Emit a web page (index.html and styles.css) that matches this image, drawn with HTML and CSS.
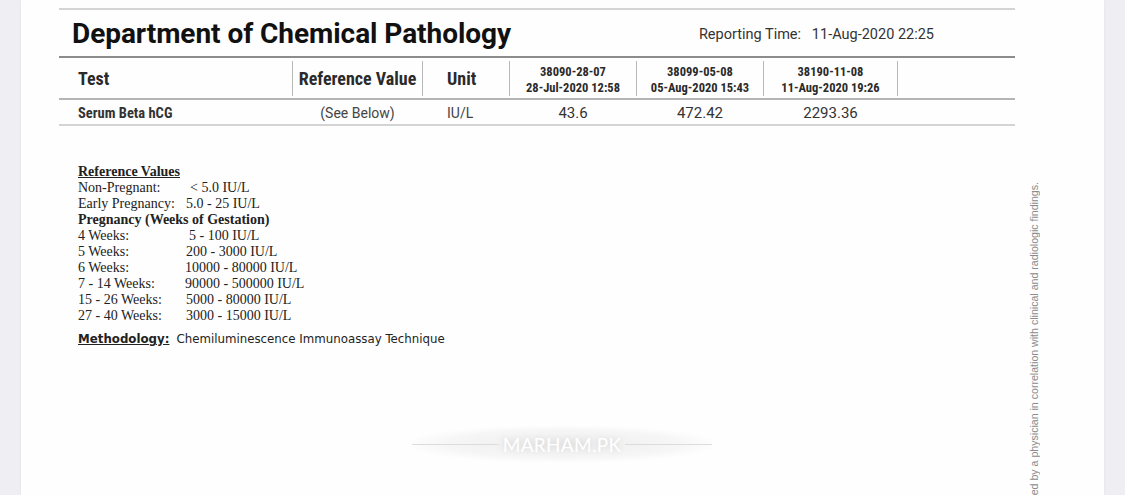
FILE: index.html
```html
<!DOCTYPE html>
<html>
<head>
<meta charset="utf-8">
<link rel="stylesheet" href="styles.css">
</head>
<body>
<div class="page">
  <div class="report">
    <div class="rule rule-light"></div>
    <div class="title-row">
      <h1 class="title">Department of Chemical Pathology</h1>
      <div class="reporting">Reporting Time:&nbsp;&nbsp; 11-Aug-2020 22:25</div>
    </div>
    <div class="rule rule-dark"></div>
    <div class="thead">
      <div class="th c-test">Test</div>
      <div class="th c-ref center">Reference Value</div>
      <div class="th c-unit">Unit</div>
      <div class="th c-date center small"><span>38090-28-07</span><span>28-Jul-2020 12:58</span></div>
      <div class="th c-date center small"><span>38099-05-08</span><span>05-Aug-2020 15:43</span></div>
      <div class="th c-date3 center small"><span>38190-11-08</span><span>11-Aug-2020 19:26</span></div>
    </div>
    <div class="rule rule-mid"></div>
    <div class="trow">
      <div class="td c-test name">Serum Beta hCG</div>
      <div class="td c-ref center">(See Below)</div>
      <div class="td c-unit">IU/L</div>
      <div class="td c-date center num">43.6</div>
      <div class="td c-date center num">472.42</div>
      <div class="td c-date3 center num">2293.36</div>
    </div>
    <div class="rule rule-light"></div>

    <div class="refs">
      <div class="ref-title">Reference Values</div>
      <div class="ref-line"><span class="lbl">Non-Pregnant:</span><span class="val in5">&lt; 5.0 IU/L</span></div>
      <div class="ref-line"><span class="lbl">Early Pregnancy:</span><span class="val in1">5.0 - 25 IU/L</span></div>
      <div class="ref-sub">Pregnancy (Weeks of Gestation)</div>
      <div class="ref-line"><span class="lbl">4 Weeks:</span><span class="val in4">5 - 100 IU/L</span></div>
      <div class="ref-line"><span class="lbl">5 Weeks:</span><span class="val in1">200 - 3000 IU/L</span></div>
      <div class="ref-line"><span class="lbl">6 Weeks:</span><span class="val">10000 - 80000 IU/L</span></div>
      <div class="ref-line"><span class="lbl">7 - 14 Weeks:</span><span class="val">90000 - 500000 IU/L</span></div>
      <div class="ref-line"><span class="lbl">15 - 26 Weeks:</span><span class="val in1">5000 - 80000 IU/L</span></div>
      <div class="ref-line"><span class="lbl">27 - 40 Weeks:</span><span class="val in1">3000 - 15000 IU/L</span></div>
      <div class="method"><span class="method-lbl">Methodology:</span><span class="method-txt">Chemiluminescence Immunoassay Technique</span></div>
    </div>
  </div>

  <div class="side-note">ed by a physician in correlation with clinical and radiologic findings.</div>

  <div class="watermark">
    <span class="wm-line"></span>
    <span class="wm-text">MARHAM.PK</span>
    <span class="wm-line"></span>
  </div>
</div>
</body>
</html>
```
FILE: styles.css
```css
html, body {
  margin: 0;
  padding: 0;
}
*, *::before, *::after {
  box-sizing: border-box;
}
body {
  background: #eeeef3;
  width: 1125px;
  height: 495px;
  overflow: hidden;
}
.page {
  position: relative;
  margin-left: 21px;
  width: 1083px;
  height: 495px;
  background: #fefefe;
  overflow: hidden;
  box-shadow: 0 0 3px rgba(0,0,0,0.06);
}
.report {
  margin-left: 38px;
  width: 956px;
  padding-top: 8px;
  font-family: Roboto, "Liberation Sans", sans-serif;
  color: #222;
}
.rule {
  height: 2px;
}
.rule-light { background: #d4d4d4; }
.rule-dark { background: #8c8c8c; }
.rule-mid { background: #b4b4b4; }

.title-row {
  display: flex;
  align-items: center;
  height: 46px;
}
.title {
  margin: 0 0 0 13px;
  font-size: 28px;
  font-weight: 700;
  color: #111;
  letter-spacing: -0.05px;
}
.reporting {
  margin-left: auto;
  margin-right: 81px;
  font-size: 14.5px;
  color: #333;
  padding-top: 2px;
}

.thead {
  display: flex;
  height: 40px;
  align-items: stretch;
}
.th {
  font-family: "Liberation Sans Narrow", "Roboto Condensed", Roboto, sans-serif;
  font-weight: 700;
  font-size: 18px;
  color: #2a2a2a;
  display: flex;
  align-items: center;
  margin: 3px 0 2px;
  border-right: 1px solid #b8b8b8;
}
.th.center { justify-content: center; }
.th.small {
  flex-direction: column;
  font-size: 12.5px;
  line-height: 16px;
  padding-top: 3px;
}
.c-test { width: 234px; padding-left: 19px; }
.c-ref { width: 130px; }
.c-unit { width: 87px; padding-left: 24px; }
.c-date { width: 127px; }
.c-date3 { width: 134px; }
.center { text-align: center; }

.trow {
  display: flex;
  height: 24px;
  align-items: center;
}
.td {
  font-size: 14px;
  color: #444;
  border-right: 1px solid transparent;
  padding-top: 2px;
}
.td.name {
  font-family: "Liberation Sans Narrow", "Roboto Condensed", Roboto, sans-serif;
  font-weight: 700;
  font-size: 14.5px;
  color: #333;
}
.td.num {
  font-size: 15px;
  color: #333;
}

.refs {
  margin-left: 19px;
  margin-top: 38px;
  font-family: "Liberation Serif", "Times New Roman", serif;
  font-size: 14px;
  line-height: 16px;
  color: #222;
}
.ref-title {
  font-weight: 700;
  text-decoration: underline;
}
.ref-sub {
  font-weight: 700;
}
.ref-line {
  display: flex;
}
.lbl {
  width: 107px;
  flex: none;
}
.val.in1 { padding-left: 1px; }
.val.in4 { padding-left: 4px; }
.val.in5 { padding-left: 5px; }
.method {
  margin-top: 7px;
  font-family: "DejaVu Sans", Verdana, sans-serif;
  font-size: 11.8px;
  color: #222;
}
.method-lbl {
  font-weight: 700;
  text-decoration: underline;
}
.method-txt {
  margin-left: 7px;
}

.side-note {
  position: absolute;
  left: 1007px;
  top: 182px;
  writing-mode: vertical-rl;
  transform: rotate(180deg);
  white-space: nowrap;
  font-family: "Liberation Sans", Arial, sans-serif;
  font-size: 10.6px;
  color: #8a8a8a;
}

.watermark {
  position: absolute;
  left: 391px;
  top: 426px;
  width: 300px;
  height: 36px;
  display: flex;
  align-items: center;
  gap: 4px;
  background: radial-gradient(ellipse at center, rgba(0,0,0,0.07) 0%, rgba(0,0,0,0.03) 55%, rgba(0,0,0,0) 75%);
}
.wm-line {
  flex: 1;
  height: 1px;
  background: #dcdcdc;
}
.wm-text {
  font-family: Lato, "Open Sans", sans-serif;
  font-size: 19px;
  font-weight: 400;
  letter-spacing: 0.3px;
  color: #ffffff;
  text-shadow: 0 0 6px rgba(0,0,0,0.12);
}
```
